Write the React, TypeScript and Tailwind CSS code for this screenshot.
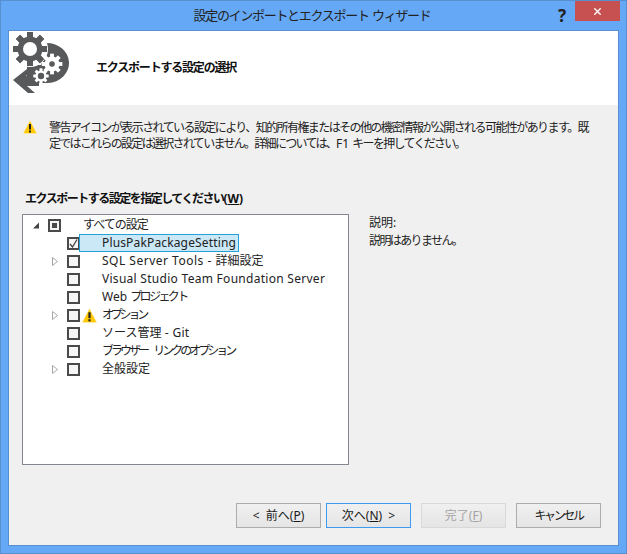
import type { ReactNode } from "react";
import { X } from "lucide-react";

const font = "font-['Noto_Sans','Noto_Sans_CJK_JP',sans-serif]";

function Warning({ size = 14 }: { size?: number }) {
  return (
    <svg width={size} height={size} viewBox="0 0 14 14" className="shrink-0">
      <path d="M7 0.5 L13.8 13.5 H0.2 Z" fill="#ffc800" stroke="#fff3c4" strokeWidth="0.5" />
      <rect x="6" y="4" width="2" height="5.5" fill="#222" />
      <rect x="6" y="10.5" width="2" height="2" fill="#222" />
    </svg>
  );
}

function Gear({ cx, cy, r, hole, fill, holeFill }: { cx: number; cy: number; r: number; hole: number; fill: string; holeFill: string }) {
  const teeth = [0, 45, 90, 135, 180, 225, 270, 315];
  return (
    <g>
      {teeth.map((a) => (
        <rect
          key={a}
          x={cx - r * 0.24}
          y={cy - r * 1.36}
          width={r * 0.48}
          height={r * 2.72}
          fill={fill}
          transform={`rotate(${a} ${cx} ${cy})`}
        />
      ))}
      <circle cx={cx} cy={cy} r={r} fill={fill} />
      <circle cx={cx} cy={cy} r={hole} fill={holeFill} />
    </g>
  );
}

function WizardLogo() {
  return (
    <svg width="56" height="63" viewBox="0 0 56 63" className="shrink-0">
      <path d="M33 12 A22 20 0 0 1 35 52 H14 V34 H28 Z" fill="#58595b" />
      <path d="M0 49 L14 38 H20 L13 45 H26 V55 H14 L22 62 H15 Z" fill="#58595b" />
      <circle cx={17} cy={18} r={18} fill="#fff" />
      <Gear cx={17} cy={18} r={12.5} hole={7} fill="#58595b" holeFill="#fff" />
      <Gear cx={39} cy={33} r={7.5} hole={2.8} fill="#fff" holeFill="#58595b" />
      <Gear cx={28} cy={45} r={5.5} hole={3.2} fill="#fff" holeFill="#58595b" />
    </svg>
  );
}

function Check({ state }: { state: "on" | "off" | "mixed" }) {
  return (
    <span className="w-[13px] h-[13px] border-2 border-[#4a4a4a] bg-[#f6f6f6] flex items-center justify-center shrink-0">
      {state === "mixed" && <span className="w-[5px] h-[5px] bg-[#4a4a4a]" />}
      {state === "on" && (
        <svg width="9" height="9" viewBox="0 0 9 9">
          <path d="M1 5 L3.5 8 L8 0.5" fill="none" stroke="#444" strokeWidth="1.3" />
        </svg>
      )}
    </span>
  );
}

function Arrow({ open }: { open?: boolean }) {
  return (
    <svg width="8" height="9" viewBox="0 0 8 9" className="shrink-0">
      {open ? (
        <path d="M7 1.5 V7.5 H1 Z" fill="#444" />
      ) : (
        <path d="M1.5 0.5 L6.5 4.5 L1.5 8.5 Z" fill="#fff" stroke="#a6a6a6" />
      )}
    </svg>
  );
}

type Row = { id: string; label: ReactNode; arrow?: boolean; warn?: boolean; selected?: boolean; checked?: boolean };

const rows: Row[] = [
  { id: "plus", label: <span className="tracking-[0.15px]">PlusPakPackageSetting</span>, selected: true, checked: true },
  { id: "sql", label: <><span className="whitespace-pre tracking-[0.5px]">SQL Server Tools - </span><span>詳細設定</span></>, arrow: true },
  { id: "vs", label: <span className="tracking-[0.28px]">Visual Studio Team Foundation Server</span> },
  { id: "web", label: <><span className="whitespace-pre">Web </span><span className="tracking-[-2.6px]">プロジェクト</span></> },
  { id: "opt", label: <span className="tracking-[-3.2px]">オプション</span>, arrow: true, warn: true },
  { id: "git", label: <><span>ソース管理</span><span className="whitespace-pre tracking-[0.3px]"> - Git</span></> },
  { id: "browser", label: <><span className="tracking-[-3px]">ブラウザー</span><span className="whitespace-pre">  </span><span className="tracking-[-3px]">リンクのオプション</span></> },
  { id: "general", label: <span>全般設定</span>, arrow: true },
];

function WizardButton({ label, mnemonic, before, after, focused, disabled, className }: {
  label: string;
  mnemonic?: string;
  before?: string;
  after?: string;
  focused?: boolean;
  disabled?: boolean;
  className?: string;
}) {
  return (
    <button
      className={`w-[85px] h-[25px] border flex items-center justify-center text-[12px] whitespace-pre bg-gradient-to-b from-[#f0f0f0] to-[#e5e5e5] ${
        focused ? "border-[#3c9af0]" : disabled ? "border-[#d9d9d9]" : "border-[#acacac]"
      } ${disabled ? "text-[#a3a3a3]" : "text-[#1a1a1a]"} ${className ?? ""}`}
    >
      {before}
      {label}
      {mnemonic && (
        <>
          (<span className="underline">{mnemonic}</span>)
        </>
      )}
      {after}
    </button>
  );
}

export default function App() {
  return (
    <div className={`w-[627px] h-[554px] flex flex-col bg-[#65a8f5] border border-[#5a8fcf] overflow-hidden text-[#1a1a1a] ${font}`}>
      <div className="h-[29px] flex items-center shrink-0">
        <div className="flex-1 pl-[74px] text-center text-[13px] whitespace-pre text-[#222]">
          <span className="tracking-[-1.3px]">設定のインポートとエクスポート</span> <span className="tracking-[-1.3px]">ウィザード</span>
        </div>
        <div className="w-[26px] text-[17px] font-bold text-[#222] text-center leading-none">?</div>
        <div className="w-[45px] h-[20px] bg-[#c75050] mr-[6px] self-start flex items-center justify-center">
          <X size={11} strokeWidth={3} className="text-white" />
        </div>
      </div>
      <div className="flex-1 mx-[7px] mb-[7px] flex flex-col border border-[#5a8fcf] bg-[#f0f0f0] min-h-0">
        <div className="h-[74px] bg-white flex items-start shrink-0">
          <div className="pl-[4px]">
            <WizardLogo />
          </div>
          <div className="ml-[27px] mt-[28px] text-[12px] font-bold tracking-[-1.2px] text-[#111]">エクスポートする設定の選択</div>
        </div>
        <div className="flex-1 flex flex-col px-[13px] min-h-0">
          <div className="flex mt-[15px] ml-[1px]">
            <Warning />
            <div className="ml-[12px] text-[12px] leading-[16px] text-[#222] whitespace-nowrap">
              <div className="tracking-[-1.58px]">警告アイコンが表示されている設定により、知的所有権またはその他の機密情報が公開される可能性があります。既</div>
              <div className="whitespace-pre">
                <span className="tracking-[-1.7px]">定ではこれらの設定は選択されていません。詳細については、</span>
                <span>F1 </span>
                <span className="tracking-[-1.7px]">キーを押してください。</span>
              </div>
            </div>
          </div>
          <div className="mt-[39px] ml-[3px] text-[12px] font-bold leading-[16px] text-[#111]">
            <span className="tracking-[-1.5px]">エクスポートする設定を指定してください</span>(<span className="underline">W</span>)
          </div>
          <div className="flex mt-[7px]">
            <div className="w-[327px] h-[251px] border border-[#828790] bg-white pt-[1px] shrink-0">
              <div className="h-[18px] flex items-center text-[12px] text-[#222]">
                <span className="ml-[9px] w-[16px]"><Arrow open /></span>
                <Check state="mixed" />
                <span className="ml-[22px] tracking-[-1px]">すべての設定</span>
              </div>
              {rows.map((r) => (
                <div key={r.id} className="h-[18px] flex items-center text-[12px] text-[#222]">
                  <span className="ml-[28px] w-[16px]">{r.arrow && <Arrow />}</span>
                  <Check state={r.checked ? "on" : "off"} />
                  {r.warn && (
                    <span className="ml-[2px]"><Warning size={15} /></span>
                  )}
                  <span
                    className={`h-[18px] flex items-center whitespace-nowrap ${
                      r.selected
                        ? "-ml-[1px] w-[160px] pl-[22px] bg-[#cbe8f6] border border-[#26a0da]"
                        : r.warn
                          ? "ml-[5px]"
                          : "ml-[22px]"
                    }`}
                  >
                    {r.label}
                  </span>
                </div>
              ))}
            </div>
            <div className="ml-[20px] text-[12px] leading-[18px] text-[#222]">
              <div>説明:</div>
              <div className="tracking-[-1.6px]">説明はありません。</div>
            </div>
          </div>
          <div className="flex mt-[38px] ml-[214px]">
            <WizardButton label="前へ" mnemonic="P" before="<  " />
            <WizardButton label="次へ" mnemonic="N" after="  >" focused className="ml-[5px]" />
            <WizardButton label="完了" mnemonic="F" disabled className="ml-[10px]" />
            <WizardButton label="キャンセル" className="ml-[10px] tracking-[-2.4px]" />
          </div>
        </div>
      </div>
    </div>
  );
}
